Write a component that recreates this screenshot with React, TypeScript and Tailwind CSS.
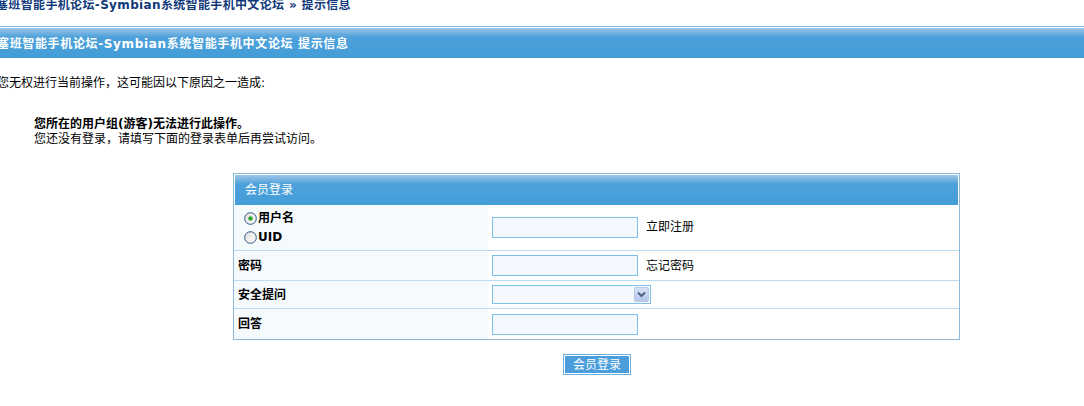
import React from "react";

const font = { fontFamily: '"DejaVu Sans", "Noto Sans CJK SC", sans-serif' };

function Radio({ checked }: { checked?: boolean }) {
  return (
    <svg width="13" height="13" viewBox="0 0 13 13" className="shrink-0">
      <defs>
        <linearGradient id={checked ? "rg1" : "rg2"} x1="0" y1="0" x2="1" y2="1">
          <stop offset="0" stopColor="#dcdcd7" />
          <stop offset="1" stopColor="#ffffff" />
        </linearGradient>
      </defs>
      <circle cx="6.5" cy="6.5" r="5.8" fill={`url(#${checked ? "rg1" : "rg2"})`} stroke="#2f5b87" strokeWidth="1" />
      {checked && <circle cx="6.5" cy="6.5" r="2.2" fill="#2fa52f" />}
    </svg>
  );
}

function TextInput() {
  return <div className="w-[146px] h-[21px] border border-[#7fc0e8] bg-[#f3f9fe]" />;
}

export default function App() {
  return (
    <div className="w-full h-[406px] overflow-hidden bg-white text-black text-[12px]" style={font}>
      {/* breadcrumb */}
      <div className="-mt-[3px] h-[29px] -ml-[4px] leading-[16px] font-bold text-[12px] tracking-[0.35px] text-[#10397a] whitespace-nowrap">
        塞班智能手机论坛-Symbian系统智能手机中文论坛 » 提示信息
      </div>
      <div className="h-px bg-[#78b6e4]" />
      <div className="mt-px h-[30px] bg-gradient-to-b from-[#9cc6e8] via-[#4da1da] via-30% to-[#439dd8] flex items-center">
        <span className="-ml-[3px] mt-px font-bold text-white text-[12px] tracking-[0.65px] whitespace-nowrap">
          塞班智能手机论坛-Symbian系统智能手机中文论坛 提示信息
        </span>
      </div>

      {/* message */}
      <div className="mt-[18px] -ml-[3px] leading-[14px] whitespace-nowrap">您无权进行当前操作，这可能因以下原因之一造成:</div>
      <div className="mt-[27px] ml-[34px] leading-[15px]">
        <div className="font-bold">您所在的用户组(游客)无法进行此操作。</div>
        <div>您还没有登录，请填写下面的登录表单后再尝试访问。</div>
      </div>

      {/* login table */}
      <div className="mt-[26px] ml-[233px] w-[727px] border border-[#8db8d8] bg-white">
        <div className="m-px mb-0 h-[30px] bg-gradient-to-b from-[#9cc6e8] via-[#4da1da] via-30% to-[#439dd8] flex items-center pl-[10px] text-white">
          会员登录
        </div>
        {/* row 1 */}
        <div className="flex h-[46px] border-b border-[#b9dcf4]">
          <div className="w-[254px] bg-[#f5fafd] flex flex-col justify-center pl-[10px] gap-[5px] font-bold">
            <div className="flex items-center gap-[1px] leading-[14px]"><Radio checked />用户名</div>
            <div className="flex items-center gap-[1px] leading-[14px]"><Radio />UID</div>
          </div>
          <div className="flex-1 flex items-center pl-[4px] gap-[8px] -mt-[1px]">
            <TextInput />
            <span>立即注册</span>
          </div>
        </div>
        {/* row 2 */}
        <div className="flex h-[30px] border-b border-[#b9dcf4]">
          <div className="w-[254px] bg-[#f5fafd] flex items-center pl-[4px] font-bold">密码</div>
          <div className="flex-1 flex items-center pl-[4px] gap-[8px]">
            <TextInput />
            <span>忘记密码</span>
          </div>
        </div>
        {/* row 3 */}
        <div className="flex h-[28px] border-b border-[#b9dcf4]">
          <div className="w-[254px] bg-[#f5fafd] flex items-center pl-[4px] font-bold">安全提问</div>
          <div className="flex-1 flex items-center pl-[4px]">
            <div className="w-[159px] h-[19px] border border-[#7fc0e8] bg-[#f3f9fe] flex justify-end items-center pr-px">
              <div className="w-[15px] h-[15px] rounded-[2px] bg-gradient-to-b from-[#d7e1f6] to-[#b5c6ea] border border-[#b8c8e8] flex items-center justify-center">
                <svg width="9" height="7" viewBox="0 0 9 7">
                  <path d="M1 1.5 L4.5 5 L8 1.5" fill="none" stroke="#4d6185" strokeWidth="2" />
                </svg>
              </div>
            </div>
          </div>
        </div>
        {/* row 4 */}
        <div className="flex h-[30px]">
          <div className="w-[254px] bg-[#f5fafd] flex items-center pl-[4px] font-bold">回答</div>
          <div className="flex-1 flex items-center pl-[4px]">
            <TextInput />
          </div>
        </div>
      </div>

      {/* button */}
      <div className="mt-[14px] ml-[563px] w-[68px] h-[21px] bg-[#4b9edb] border border-[#6aaee2] p-0">
        <div className="w-full h-full border border-white flex items-center justify-center text-white leading-none">
          会员登录
        </div>
      </div>
    </div>
  );
}
